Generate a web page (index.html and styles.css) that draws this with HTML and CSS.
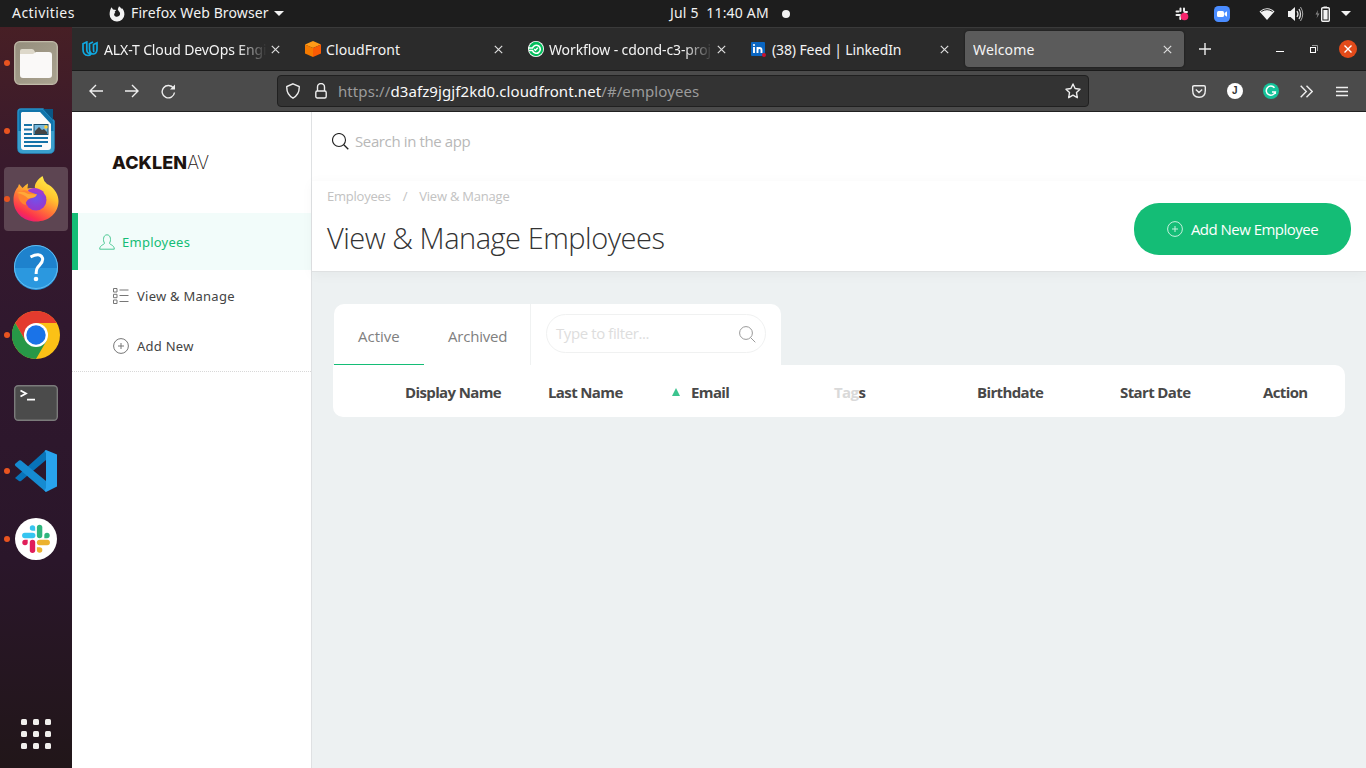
FILE: index.html
```html
<!DOCTYPE html>
<html lang="en">
<head>
<meta charset="utf-8">
<title>Welcome</title>
<link rel="stylesheet" href="styles.css">
</head>
<body>
<div class="screen">
  <header class="topbar">
    <span class="t-activities">Activities</span>
    <svg class="t-fox" width="16" height="16" viewBox="0 0 16 16"><path d="M8 15.500A7.200 7.200 0 0 1 .6 8.200C.7 5.600 1.200 3 2.600 1.200L4 3.500 7.200 4.100C6.800 5.100 5.800 5.300 5.700 6.100L6.300 7C5.200 7.300 5 8.200 5.300 9.300 5.900 10.900 8.200 11.400 9.900 10 12 8.200 10.900 5.800 9.600 4.900L8.800 3.300 10 .3C11.200 1 12 2 12.500 2.900L12.800 2C14.400 3.600 15.500 5.800 15.400 8.400A7.300 7.300 0 0 1 8 15.500Z" fill="#f2f2f2"/></svg>
    <span class="t-app">Firefox Web Browser</span>
    <i class="caret"></i>
    <span class="t-clock">Jul 5&nbsp; 11:40 AM</span>
    <i class="dot"></i>
    <div class="tray">
      <svg class="tray-slack" width="16" height="16" viewBox="0 0 16 16"><g stroke="#eee" stroke-width="2" stroke-linecap="round"><path d="M6.500 5V2.500M2.500 5.500H4.500M10 2.500V5M10.500 6H13M2.500 9H6M6.300 11V13"/></g><circle cx="10.500" cy="10.500" r="3.800" fill="#f6256c"/></svg>
      <svg class="tray-zoom" width="16" height="16" viewBox="0 0 16 16"><rect width="16" height="16" rx="4.500" fill="#4a8cff"/><rect x="3" y="5" width="7" height="6" rx="1.500" fill="#fff"/><path d="M10.500 7 13 5.300V10.700L10.500 9Z" fill="#fff"/></svg>
      <svg class="tray-wifi" width="16" height="14" viewBox="0 0 16 14"><path d="M.5 4.500Q8-2 15.500 4.500L8 13Z" fill="#f2f2f2"/><path d="M2.300 4.500Q8 .8 13.700 4.500" fill="none" stroke="#1d1d1d"/></svg>
      <svg class="tray-vol" width="17" height="16" viewBox="0 0 17 16"><path d="M1 5H3.500L8 1V15L3.500 11H1Z" fill="#f2f2f2"/><path d="M10 5Q12 8 10 11M12 3Q15 8 12 13" fill="none" stroke="#ddd" stroke-width="1.300"/><path d="M13.500 1Q18 8 13.500 15" fill="none" stroke="#aaa"/></svg>
      <svg class="tray-bat" width="15" height="16" viewBox="0 0 15 16"><path d="M3 4 .5 8.500H2.500L1.500 12.500 4.500 7.500H2.500Z" fill="#888"/><path d="M8.500 2V.5H12V2" fill="#f2f2f2"/><rect x="6.700" y="1.700" width="7.600" height="13.600" rx="1" fill="none" stroke="#f2f2f2" stroke-width="1.400"/><rect x="8.400" y="4" width="4.200" height="9.500" fill="#f2f2f2"/></svg>
      <i class="caret"></i>
    </div>
  </header>

  <div class="desktop">
    <aside class="dock">
      <div class="app running"><svg width="44" height="44" viewBox="0 0 44 44"><defs><linearGradient id="fg" x2="1" y2="1"><stop stop-color="#958e7d"/><stop offset="1" stop-color="#aaa390"/></linearGradient></defs><rect x=".7" y=".7" width="42.600" height="42.600" rx="5" fill="url(#fg)" stroke="#c1bba9" stroke-width="1.300"/><path d="M6 12V10Q6 8 8 8H18Q20 8 21 11L22 14H6Z" fill="#ddd8ca"/><path d="M6 13H19L22 11H35Q38 11 38 14V34Q38 37 35 37H9Q6 37 6 34Z" fill="#faf9f8"/></svg></div>
      <div class="app running"><svg width="40" height="46" viewBox="0 0 40 46"><path d="M5 1H27L38 13V40Q38 45 33 45H7Q2 45 2 40V4Q2 1 5 1Z" fill="#1174aa" stroke="#238fc8" stroke-width="1.500"/><path d="M2 23H38V40Q38 45 33 45H7Q2 45 2 40Z" fill="#3a9fcd"/><path d="M6 4H24L35 16V39Q35 42 32 42H8Q5 42 5 39V5Z" fill="#fbfbfb"/><path d="M27 1H37V12Z" fill="#0a5685"/><path d="M8 17H16M8 21.500H16M8 26H16M8 30H32M8 34H32M8 38H26" stroke="#1673a8" stroke-width="2"/><rect x="18" y="16.500" width="14" height="10" fill="#75b9df" stroke="#174e6b"/><path d="M19 26V23L23 19 26 22 28 21 31 24V26Z" fill="#444"/><circle cx="30" cy="19" r="1.800" fill="#fc3"/></svg></div>
      <div class="app running active"><svg width="48" height="48" viewBox="0 0 48 48"><defs><linearGradient id="fx" x1=".8" y1="0" x2=".25" y2="1"><stop stop-color="#fff14d"/><stop offset=".35" stop-color="#ffc52e"/><stop offset=".62" stop-color="#ff7338"/><stop offset=".85" stop-color="#fb304f"/><stop offset="1" stop-color="#e31587"/></linearGradient><radialGradient id="fp" cx=".5" cy=".4"><stop stop-color="#6f55ed"/><stop offset="1" stop-color="#913bd1"/></radialGradient></defs><path d="M24 46.500C11 46.500 1.500 37 1.500 25 1.500 19 3.500 14.500 6 12L7 9 10.500 13Q13 10 16 8.500L15.500 13.500Q19 12.500 23 13.500C22 9 26 4 30.500 1Q31.500 6 35 9L37 10C43 14 46.500 20 46.500 26 46.500 38 37 46.500 24 46.500Z" fill="url(#fx)"/><circle cx="24" cy="25" r="10.500" fill="url(#fp)"/><path d="M16 15Q23 10 32 17L30 18 35 23Q31 20 28 19 24 16 17 18Z" fill="#a13bd0"/><path d="M6 18Q12 13 18 17L25 19.500Q23 23 18 23.500 13 26 14 30 6 28 6 18Z" fill="#ff8330"/><path d="M5 18Q10 15 16 19L25 19.500 23 22 16 23.500Q12 19 5 18Z" fill="#ffa938"/></svg></div>
      <div class="app"><svg width="46" height="46" viewBox="0 0 46 46"><circle cx="23" cy="23" r="22" fill="#1e82cd"/><path d="M1 24A22 22 0 0 0 45 24Z" fill="#2b98df"/><circle cx="23" cy="23" r="21.500" fill="none" stroke="#63bdf0"/><path d="M17.500 13Q27 8 29.500 14C31 19 25.500 21 24 24.500Q23 27 23.200 30" fill="none" stroke="#fff" stroke-width="3"/><circle cx="23" cy="35" r="2.300" fill="#fff"/></svg></div>
      <div class="app running"><svg width="48" height="48" viewBox="0 0 48 48"><circle cx="24" cy="24" r="24" fill="#fbc116"/><path d="M24 24V12H44.800A24 24 0 0 0 3.200 12L13.600 30Z" fill="#e33b2e"/><path d="M3.200 12A24 24 0 0 0 24 48L34.400 30 24 24 13.600 30Z" fill="#279847"/><circle cx="24" cy="24" r="12" fill="#fff"/><circle cx="24" cy="24" r="9.700" fill="#1a73e8"/></svg></div>
      <div class="app"><svg width="44" height="36" viewBox="0 0 44 36"><rect x=".7" y=".7" width="42.600" height="34.600" rx="3.500" fill="#4b4b4b" stroke="#7b7b7b" stroke-width="1.400"/><path d="M6.500 5.500 12 8.500 6.500 11.500M13 14.700H21" stroke="#fff" stroke-width="1.800" fill="none"/></svg></div>
      <div class="app running"><svg width="44" height="44" viewBox="0 0 44 44"><path d="M1 29 5 32Q6 32.500 7 32L32 11V1Z" fill="#0873b8"/><path d="M1 15 5 11.500Q6 11 7 11.500L32 32V43L1.500 17Q.5 16 1 15Z" fill="#168bd1"/><path d="M32 1 43 5.500V37.500L32 43 30.500 41.500 32 39V4L30.500 2Z" fill="#28a3ed"/></svg></div>
      <div class="app running"><svg width="42" height="42" viewBox="0 0 42 42"><circle cx="21" cy="21" r="21" fill="#fff"/><g stroke-width="5.400" stroke-linecap="round"><path d="M9.800 17.500H17.700" stroke="#36c5f0"/><path d="M24.600 9.500V17.500" stroke="#2eb67d"/><path d="M24.600 24.500H32.200" stroke="#ecb22e"/><path d="M17.500 24.500V32.200" stroke="#e01e5a"/></g><path d="M20.200 12.700H17.500A2.700 2.700 0 1 1 20.200 10Z" fill="#36c5f0"/><path d="M29.300 20.200V17.500A2.700 2.700 0 1 1 32 20.200Z" fill="#2eb67d"/><path d="M21.900 29.300H24.600A2.700 2.700 0 1 1 21.900 32Z" fill="#ecb22e"/><path d="M12.700 21.800V24.500A2.700 2.700 0 1 1 10 21.800Z" fill="#e01e5a"/></svg></div>
      <div class="launcher"><i></i><i></i><i></i><i></i><i></i><i></i><i></i><i></i><i></i></div>
    </aside>

    <div class="browser">
      <div class="tabstrip">
        <div class="tab"><svg width="16" height="16" viewBox="0 0 16 16"><path d="M4.800 1 1 2.800V8.500Q1 14.200 6 14.500Q8 14.500 9 13Q5 12.500 4.800 9ZM11 1 7.500 2.700V8Q7.500 13 11.500 13Q15 12.500 15 8V1.800L11.500 3.500V8Q11.500 10 12 11" fill="none" stroke="#10a8e0" stroke-width="1.700"/></svg><span class="label fade">ALX-T Cloud DevOps Engi</span><svg class="close" width="9" height="9" viewBox="0 0 9 9"><path d="M.8.8 8.200 8.200M8.200.8.8 8.200"/></svg></div>
        <div class="tab"><svg width="16" height="16" viewBox="0 0 16 16"><path d="M8 0 16 3.500 8 7 0 3.500Z" fill="#ff9b17"/><path d="M0 3.500 8 7V16L0 12.500Z" fill="#f57a00"/><path d="M16 3.500 8 7V16L16 12.500Z" fill="#fb5b04"/></svg><span class="label cloud">CloudFront</span><svg class="close" width="9" height="9" viewBox="0 0 9 9"><path d="M.8.8 8.200 8.200M8.200.8.8 8.200"/></svg></div>
        <div class="tab"><svg width="16" height="16" viewBox="0 0 16 16"><circle cx="8" cy="8" r="8" fill="#fff"/><circle cx="8" cy="8" r="7.200" fill="#05bd5c"/><path d="M0 7H4.500A4 4 0 1 1 4.500 9.500H1" fill="none" stroke="#fff" stroke-width="1.600"/><path d="M6.200 8 7.500 9.300 9.800 6.800" fill="none" stroke="#fff" stroke-width="1.400"/></svg><span class="label fade">Workflow - cdond-c3-proj</span><svg class="close" width="9" height="9" viewBox="0 0 9 9"><path d="M.8.8 8.200 8.200M8.200.8.8 8.200"/></svg></div>
        <div class="tab"><svg width="16" height="16" viewBox="0 0 16 16"><rect y="1" width="14" height="14" rx="1" fill="#0a66c2"/><path d="M3 6V12M6.500 6V12M6.500 9Q6.500 7 8.500 7T10.500 9V12" fill="none" stroke="#fff" stroke-width="1.900"/><circle cx="3" cy="4" r="1.100" fill="#fff"/><circle cx="13" cy="14" r="2" fill="#cb112d"/></svg><span class="label">(38) Feed | LinkedIn</span><svg class="close" width="9" height="9" viewBox="0 0 9 9"><path d="M.8.8 8.200 8.200M8.200.8.8 8.200"/></svg></div>
        <div class="tab current"><span class="label">Welcome</span><svg class="close" width="9" height="9" viewBox="0 0 9 9"><path d="M.8.8 8.200 8.200M8.200.8.8 8.200"/></svg></div>
        <svg class="newtab" width="12" height="12" viewBox="0 0 12 12"><path d="M6 0V12M0 6H12" stroke="#eee" stroke-width="1.400"/></svg>
        <div class="winbtns">
          <svg width="8" height="8" viewBox="0 0 8 8"><path d="M0 6.500H8" stroke="#fff"/></svg>
          <svg width="8" height="8" viewBox="0 0 8 8"><path d="M2 .5H7.500V6" fill="none" stroke="#999"/><rect x=".5" y="2.500" width="5" height="5" fill="#2b2b2b" stroke="#fff"/></svg>
          <svg width="18" height="18" viewBox="0 0 18 18"><circle cx="9" cy="9" r="9" fill="#e34b1a"/><path d="M5.500 5.500 12.500 12.500M12.500 5.500 5.500 12.500" stroke="#fff" stroke-width="1.400"/></svg>
        </div>
      </div>

      <div class="toolbar">
        <svg width="14" height="14" viewBox="0 0 14 14"><path d="M14 7H1M7 1 1 7 7 13"/></svg>
        <svg width="14" height="14" viewBox="0 0 14 14"><path d="M0 7H13M7 1 13 7 7 13"/></svg>
        <svg class="reload" width="15" height="15" viewBox="0 0 15 15"><path d="M12.500 4.200A6.200 6.200 0 1 0 13.500 8.500"/><path d="M14 .5V5.500H9Z" fill="#eee" stroke="none"/></svg>
        <div class="urlbar">
          <svg width="14" height="16" viewBox="0 0 14 16"><path d="M7 .8 13.200 3.500Q13.700 11.500 7 15.200 .3 11.500 .8 3.500Z"/></svg>
          <svg class="lock" width="12" height="16" viewBox="0 0 12 16"><rect x=".8" y="8" width="10.400" height="7" rx="1.500"/><path d="M2.500 8V4A3.500 3.500 0 0 1 9.500 4V8"/></svg>
          <span class="url">https://<b>d3afz9jgjf2kd0.cloudfront.net</b>/#/employees</span>
          <svg width="16" height="16" viewBox="0 0 16 16"><path d="M8 1 10.100 5.500 15 6.200 11.500 9.600 12.300 14.700 8 12.200 3.700 14.700 4.500 9.600 1 6.200 5.900 5.500Z" stroke-linejoin="round"/></svg>
        </div>
        <div class="tools">
          <svg width="14" height="13" viewBox="0 0 14 13"><path d="M2 .8H12Q13.300.8 13.300 2V5.500Q13.300 12.200 7 12.200T.7 5.500V2Q.7.8 2 .8ZM3.800 4.500 7 7.500 10.200 4.500"/></svg>
          <span class="badge-j">J</span>
          <svg width="16" height="16" viewBox="0 0 16 16"><circle cx="8" cy="8" r="8" fill="#15c39a" stroke="none"/><path d="M11.500 4.800A4.600 4.600 0 1 0 12.300 9H9M12.300 8.500V11" stroke="#fff" stroke-width="1.500"/></svg>
          <svg width="13" height="13" viewBox="0 0 13 13"><path d="M.7.7 6.300 6.500 .7 12.300M6.500.7 12.200 6.500 6.500 12.300"/></svg>
          <svg class="menu" width="12" height="11" viewBox="0 0 12 11"><path d="M0 1.500H12M0 5.500H12M0 9.500H12"/></svg>
        </div>
      </div>

      <div class="page">
        <nav class="sidebar">
          <div class="logo"><b>ACKLEN</b><span>AV</span></div>
          <div class="nav-main"><svg width="16" height="16" viewBox="0 0 16 16"><path d="M5.500 9C3.800 7 4 .8 8 .8S12.200 7 10.500 9C10 10.500 15.500 11 15.300 15.200H.7C.5 11 6 10.500 5.500 9Z" fill="none" stroke="#4cc994"/></svg><span>Employees</span></div>
          <div class="nav-sub"><svg width="16" height="16" viewBox="0 0 16 16" fill="none" stroke="#777"><path d="M.5.5H4V4H.5ZM.5 6.300H4V9.700H.5ZM.5 12H4V15.500H.5ZM6.500 2H15.500M6.500 7.500H15.500M6.500 13.500H15.500"/></svg><span>View &amp; Manage</span></div>
          <div class="nav-sub"><svg width="16" height="16" viewBox="0 0 16 16" fill="none" stroke="#777"><circle cx="8" cy="8" r="7.400"/><path d="M8 5V11M5 8H11"/></svg><span>Add New</span></div>
        </nav>
        <main class="main">
          <div class="search"><svg width="17" height="17" viewBox="0 0 17 17"><circle cx="7" cy="7" r="6.500" fill="none" stroke="#222" stroke-width="1.100"/><path d="M11.800 11.800 16.300 16.300" stroke="#222" stroke-width="1.300"/></svg><span>Search in the app</span></div>
          <div class="heading">
            <div>
              <div class="crumbs"><span>Employees</span><i>/</i><span>View &amp; Manage</span></div>
              <h1>View &amp; Manage Employees</h1>
            </div>
            <button class="add"><svg width="16" height="16" viewBox="0 0 16 16" fill="none" stroke="#c5f1dd"><circle cx="8" cy="8" r="7.400"/><path d="M8 5V11M5 8H11"/></svg><span>Add New Employee</span></button>
          </div>
          <section class="content">
            <div class="panel-top">
              <div class="ptab selected">Active</div>
              <div class="ptab">Archived</div>
              <div class="filter-wrap"><div class="filter"><span>Type to filter...</span><svg width="17" height="17" viewBox="0 0 17 17" fill="none" stroke="#999"><circle cx="7" cy="7" r="6.400"/><path d="M11.700 11.700 16.300 16.300"/></svg></div></div>
            </div>
            <div class="thead">
              <span>Display Name</span><span class="sorted">Last Name<i class="sort"></i></span><span>Email</span><span><em>Tag</em>s</span><span>Birthdate</span><span>Start Date</span><span>Action</span>
            </div>
          </section>
        </main>
      </div>
    </div>
  </div>
</div>
</body>
</html>
```
FILE: styles.css
```css
* { box-sizing: border-box; }
body { margin: 0; font-family: "Noto Sans", sans-serif; }
svg { display: block; flex: none; }
i { font-style: normal; }
.screen { width: 1366px; height: 768px; overflow: hidden; display: flex; flex-direction: column; }

.topbar { height: 27px; flex: none; background: #1d1d1d; color: #f2f2f2; display: flex; align-items: center; font-size: 14px; white-space: nowrap; padding-left: 12px; line-height: 26px; }
.topbar > span { height: 27px; }
.t-activities { width: 97px; letter-spacing: .45px; }
.t-app { margin-left: 6px; width: 143px; letter-spacing: .12px; }
.caret { border: 5px solid transparent; border-top-color: #f2f2f2; border-bottom: 0; }
.t-clock { margin-left: 386px; width: 112px; letter-spacing: .18px; }
.dot { width: 8px; height: 8px; border-radius: 50%; background: #f2f2f2; }
.tray { margin-left: auto; display: flex; align-items: center; padding-right: 15px; }
.tray-zoom { margin-left: 24px; }
.tray-wifi { margin-left: 29px; }
.tray-vol { margin-left: 12px; }
.tray-bat { margin: 0 11px 0 11px; }

.desktop { display: flex; flex: 1; min-height: 0; }
.dock { width: 72px; flex: none; display: flex; flex-direction: column; gap: 4px; padding: 4px 4px 0; background: linear-gradient(#471f25, #391a2c 18%, #30182e 40%, #2a162a 72%, #211619); }
.app { width: 64px; height: 64px; border-radius: 4px; display: grid; place-items: center; position: relative; }
.app.active { background: #5d4552; }
.app.running::before { content: ""; position: absolute; left: 0; top: 29px; width: 6px; height: 6px; border-radius: 50%; background: #e95420; }
.launcher { margin: auto auto 19px; display: grid; grid-template-columns: repeat(3, 6px); gap: 6px; }
.launcher i { width: 6px; height: 6px; border-radius: 1.5px; background: #f1efed; }

.browser { flex: 1; min-width: 0; display: flex; flex-direction: column; }
.tabstrip { height: 44px; flex: none; background: #2b2b2b; border-top: 1px solid #3a3a3a; border-bottom: 1px solid #1b1b1b; display: flex; align-items: center; padding: 0 9px 0 1px; color: #f4f4f4; font-size: 14px; }
.tab { width: 219px; height: 36px; flex: none; margin-right: 4px; padding: 0 12px 0 9px; border-radius: 4px; display: flex; align-items: center; }
.tab.current { background: #5b5b5b; box-shadow: 0 0 2px #151515; padding-left: 8px; }
.label { margin-left: 5px; white-space: nowrap; overflow: hidden; flex: 1; letter-spacing: -.12px; }
.tab:first-child .label { margin-left: 6px; }
.label.cloud { letter-spacing: .1px; }
.current .label { margin-left: 0; letter-spacing: .15px; }
.fade { -webkit-mask-image: linear-gradient(90deg, #000 82%, transparent); mask-image: linear-gradient(90deg, #000 82%, transparent); }
.close { fill: none; stroke: #ddd; stroke-width: 1.2; margin-left: 4px; }
.newtab { margin-left: 11px; }
.winbtns { margin-left: auto; display: flex; gap: 26px; align-items: center; }
.winbtns svg:last-child { margin-left: -5px; }

.toolbar { height: 41px; flex: none; background: #4b4b4b; border-bottom: 1px solid #202020; display: flex; align-items: center; padding: 0 18px 0 17px; }
.toolbar svg { fill: none; stroke: #eee; stroke-width: 1.4; }
.toolbar > svg + svg { margin-left: 22px; }
.urlbar { margin-left: 101px; width: 812px; height: 32px; background: #333; border: 1px solid #202020; border-radius: 4px; display: flex; align-items: center; padding: 0 7px 0 8px; }
.lock { margin: 0 11px 0 15px; }
.url { flex: 1; font-size: 15px; letter-spacing: .09px; color: #9b9b9b; white-space: nowrap; }
.url b { font-weight: 400; color: #fafafa; }
.tools { margin-left: auto; display: flex; align-items: center; gap: 20.4px; }
.tools .menu { margin-left: 3px; }
.badge-j { width: 16px; height: 16px; border-radius: 50%; background: #fff; color: #333; font: 700 10px/16px "Liberation Sans", sans-serif; text-align: center; }

.page { flex: 1; display: flex; min-height: 0; color: #444; }
.sidebar { width: 240px; flex: none; background: #fff; border-right: 1px solid #dfe1e3; font-size: 13px; letter-spacing: .25px; }
.logo { height: 101px; padding: 41px 0 0 40px; width: 139px; overflow: hidden; white-space: nowrap; font: 18px/20px Inter, sans-serif; color: #1d1410; }
.logo b { font-weight: 800; letter-spacing: .1px; }
.logo span { font-weight: 200; letter-spacing: -.5px; }
.nav-main { height: 57px; background: #f2fcfa; border-left: 6px solid #14bd76; padding-left: 21px; display: flex; align-items: center; gap: 7px; color: #14bd76; }
.nav-sub { height: 50px; padding: 2px 0 0 41px; display: flex; align-items: center; gap: 8px; }
.nav-sub:last-child { height: 52px; padding-bottom: 2px; border-bottom: 1px dotted #d8d8d8; }
.main { flex: 1; min-width: 0; background: #edf1f2; display: flex; flex-direction: column; font-family: "Open Sans", sans-serif; }
.search { height: 68px; background: #fff; padding: 0 0 9px 20px; display: flex; align-items: center; gap: 6px; font-size: 15px; letter-spacing: -.38px; color: #b8b8b8; }
.search span { padding-bottom: 1px; }
.heading { height: 92px; background: #fff; border-top: 1px solid #fcfcfc; border-bottom: 1px solid #dfe1e2; box-shadow: 0 3px 12px rgba(0,0,0,.04); padding: 0 15px; display: flex; justify-content: space-between; }
.crumbs { display: flex; font-size: 13px; line-height: 18px; padding-top: 6px; color: #c2c2c2; letter-spacing: -.22px; white-space: nowrap; }
.crumbs i { margin: 0 12px; }
h1 { margin: 12px 0 0; font-weight: 300; font-size: 29px; letter-spacing: -.48px; line-height: 41px; color: #333; white-space: nowrap; }
.add { margin-top: 22px; width: 217px; height: 52px; border: 0; border-radius: 25px; background: #14bd76; color: #fff; font-family: inherit; font-size: 15px; letter-spacing: -.52px; display: flex; align-items: center; justify-content: center; gap: 8px; white-space: nowrap; padding: 0; }
.content { padding: 32px 21px 0 21px; }
.panel-top { width: 447px; height: 61px; margin-left: 1px; background: #fff; border-radius: 10px 10px 0 0; display: flex; font-size: 15px; letter-spacing: -.2px; color: #808080; }
.ptab { padding: 2px 24px 0; width: 90px; line-height: 60px; white-space: nowrap; }
.ptab + .ptab { width: 107px; border-right: 1px solid #f0f2f2; }
.selected { border-bottom: 1px solid #14bd76; letter-spacing: 0; }
.filter-wrap { padding: 10px 15px; }
.filter { width: 220px; height: 39px; border: 1px solid #f0f1f1; border-radius: 20px; display: flex; align-items: center; justify-content: space-between; padding: 0 9px; color: #ddd; letter-spacing: -.4px; }
.filter span { padding-bottom: 1px; }
.filter svg { margin-top: 2px; }
.thead { width: 1012px; height: 52px; background: #fff; border-radius: 0 10px 10px 10px; padding: 2px 0 0 72px; display: grid; grid-template-columns: repeat(7, 143px); align-items: center; font-size: 15px; letter-spacing: -.62px; font-weight: 700; color: #484848; overflow: hidden; white-space: nowrap; }
.sorted { display: flex; align-items: center; justify-content: space-between; padding-right: 11px; }
.sort { border: 4.5px solid transparent; border-bottom: 8px solid #3cc48f; border-top: 0; }
.thead em { font-style: normal; color: #d9d9d9; }
```
